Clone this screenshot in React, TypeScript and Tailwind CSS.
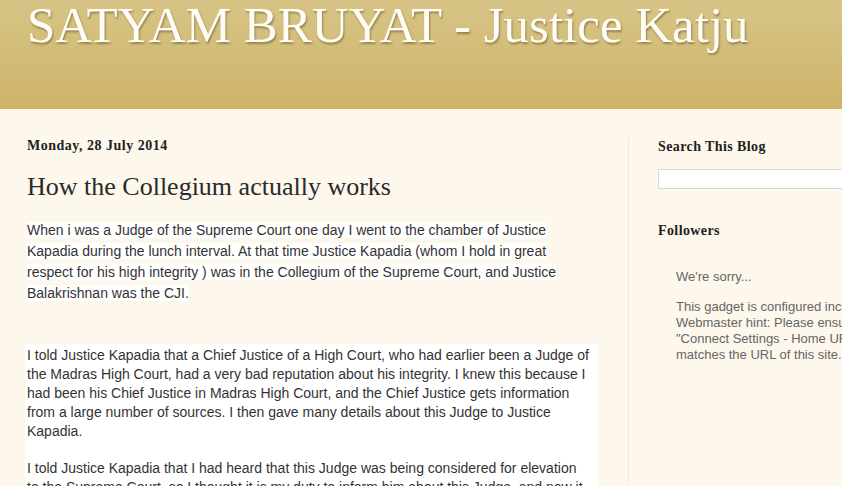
import React from "react";

const serif = { fontFamily: '"Liberation Serif", "Times New Roman", serif' };
const sans = { fontFamily: '"Liberation Sans", Arial, sans-serif' };

export default function App() {
  return (
    <div className="w-[842px] h-[486px] overflow-hidden bg-[#fdf7ec]">
      <header className="h-[109px] bg-gradient-to-b from-[#d7c486] to-[#cdb469] pl-[27px]">
        <h1
          style={serif}
          className="text-[51px] leading-[50px] text-[#fffdf6] whitespace-nowrap [text-shadow:1px_2px_2px_rgba(80,60,20,0.45)]"
        >
          SATYAM BRUYAT - Justice Katju
        </h1>
      </header>

      <div className="flex pt-[28px]">
        <main className="w-[628px] shrink-0 pl-[27px]">
          <div style={serif} className="text-[14px] leading-[18px] font-bold tracking-[0.5px] text-[#222]">
            Monday, 28 July 2014
          </div>
          <h2 style={serif} className="mt-[17px] text-[26px] leading-[30px] text-[#2a2a2a]">
            How the Collegium actually works
          </h2>
          <p style={sans} className="mt-[18px] text-[14px] leading-[21px] text-[#333] whitespace-nowrap">
            <span className="bg-white">
              When i was a Judge of the Supreme Court one day I went to the chamber of Justice
              <br />
              Kapadia during the lunch interval. At that time Justice Kapadia (whom I hold in great
              <br />
              respect for his high integrity ) was in the Collegium of the Supreme Court, and Justice
              <br />
              Balakrishnan was the CJI.
            </span>
          </p>
          <div
            style={sans}
            className="mt-[40px] -ml-[2px] w-[573px] bg-white pl-[2px] pt-[2px] text-[14px] leading-[19px] text-[#333] whitespace-nowrap"
          >
            <p>
              I told Justice Kapadia that a Chief Justice of a High Court, who had earlier been a Judge of
              <br />
              the Madras High Court, had a very bad reputation about his integrity. I knew this because I
              <br />
              had been his Chief Justice in Madras High Court, and the Chief Justice gets information
              <br />
              from a large number of sources. I then gave many details about this Judge to Justice
              <br />
              Kapadia.
            </p>
            <p className="mt-[18px]">
              I told Justice Kapadia that I had heard that this Judge was being considered for elevation
              <br />
              to the Supreme Court, so I thought it is my duty to inform him about this Judge, and now it
              <br />
              was for the Collegium to decide.
            </p>
          </div>
        </main>

        <aside className="flex-1 min-h-[400px] border-l border-[#f1e8d8] pl-[29px] pt-[1px]">
          <h3 style={serif} className="text-[14px] leading-[18px] font-bold tracking-[0.4px] text-[#222] whitespace-nowrap">
            Search This Blog
          </h3>
          <div className="mt-[13px] h-[20px] w-[240px] border border-[#d9d9d9] bg-white" />
          <h3 style={serif} className="mt-[33px] text-[14px] leading-[18px] font-bold tracking-[0.4px] text-[#222] whitespace-nowrap">
            Followers
          </h3>
          <div style={sans} className="pl-[18px] text-[13px] leading-[16px] text-[#666] whitespace-nowrap">
            <p className="mt-[29px]">We're sorry...</p>
            <p className="mt-[14px]">
              This gadget is configured incorrectly.
              <br />
              Webmaster hint: Please ensure the
              <br />
              "Connect Settings - Home URL"
              <br />
              matches the URL of this site.
            </p>
          </div>
        </aside>
      </div>
    </div>
  );
}
